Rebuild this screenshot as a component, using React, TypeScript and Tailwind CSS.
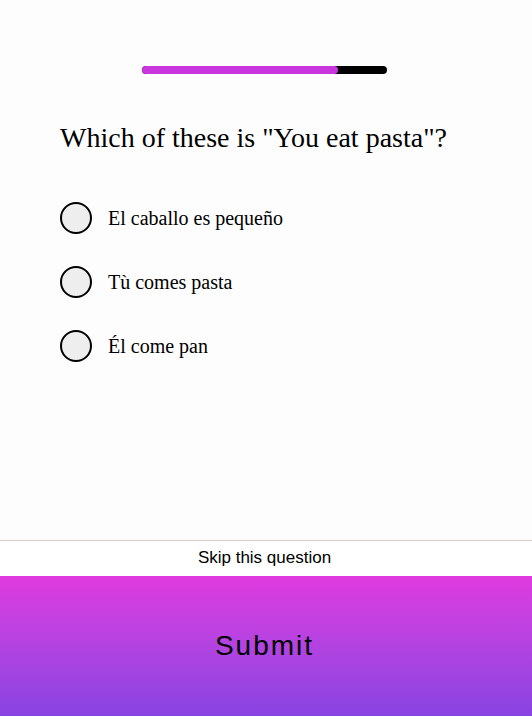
import React from "react";

const options = ["El caballo es pequeño", "Tù comes pasta", "Él come pan"];

export default function App() {
  return (
    <div className="flex h-[716px] w-[532px] flex-col bg-[#fdfdfd]">
      <div className="flex flex-1 flex-col">
        <div className="flex pl-[142px] pt-[66px]">
          <div className="h-[8px] w-[245px] rounded-full bg-black">
            <div className="h-full w-[196px] rounded-full bg-[#c936dd]" />
          </div>
        </div>
        <h1
          className="mt-[48px] pl-[60px] text-[28px] leading-[32px] text-black"
          style={{ fontFamily: '"Liberation Serif", "Times New Roman", serif' }}
        >
          Which of these is "You eat pasta"?
        </h1>
        <div className="mt-[48px] flex flex-col gap-[32px] pl-[60px]">
          {options.map((o) => (
            <label key={o} className="flex h-[32px] items-center gap-[16px]">
              <span className="h-[32px] w-[32px] rounded-full border-2 border-black bg-[#eeeeee]" />
              <span
                className="text-[20px] text-black"
                style={{ fontFamily: '"Liberation Serif", "Times New Roman", serif' }}
              >
                {o}
              </span>
            </label>
          ))}
        </div>
      </div>
      <div
        className="flex h-[36px] items-center justify-center border-t border-[#dcc8c8] bg-white pb-[1px] pr-[3px] text-[17px] text-black"
        style={{ fontFamily: '"Liberation Sans", Arial, sans-serif' }}
      >
        Skip this question
      </div>
      <div
        className="flex h-[140px] items-center justify-center bg-gradient-to-b from-[#df3adf] to-[#8743e2] pr-[3px] text-[28px] tracking-[2px] text-black"
        style={{ fontFamily: '"Liberation Sans", Arial, sans-serif' }}
      >
        Submit
      </div>
    </div>
  );
}
